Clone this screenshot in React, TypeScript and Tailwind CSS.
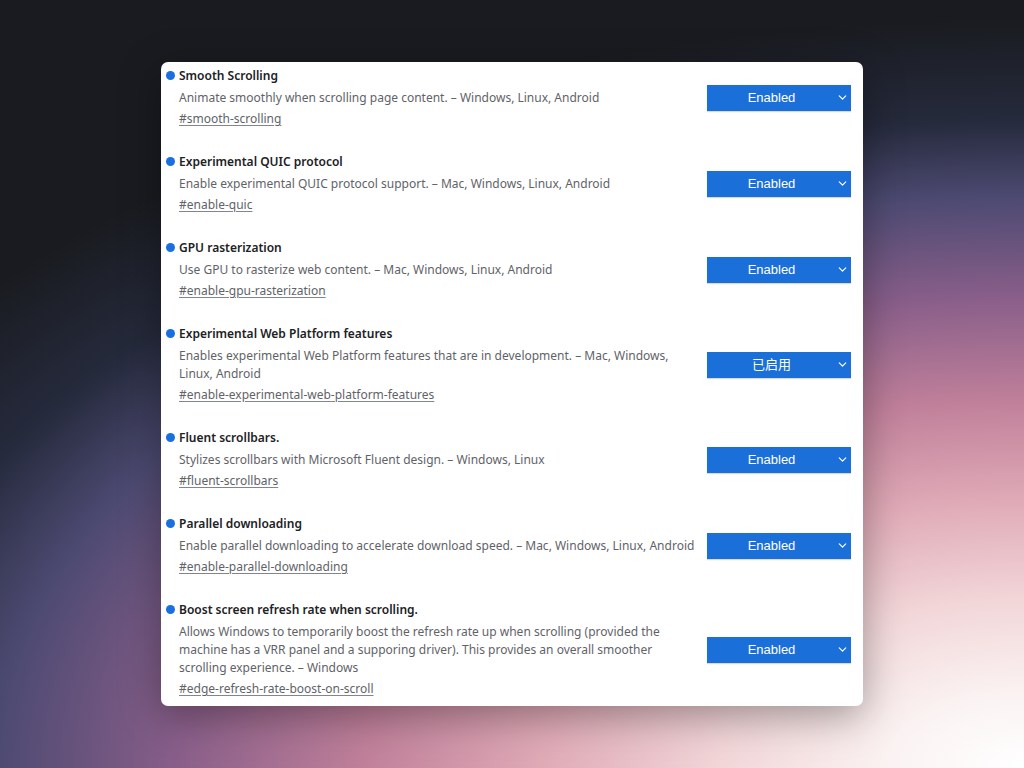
import { ChevronDown } from "lucide-react";

type Flag = {
  title: string;
  desc: string;
  tag: string;
  value: string;
};

const flags: Flag[] = [
  {
    title: "Smooth Scrolling",
    desc: "Animate smoothly when scrolling page content. – Windows, Linux, Android",
    tag: "#smooth-scrolling",
    value: "Enabled",
  },
  {
    title: "Experimental QUIC protocol",
    desc: "Enable experimental QUIC protocol support. – Mac, Windows, Linux, Android",
    tag: "#enable-quic",
    value: "Enabled",
  },
  {
    title: "GPU rasterization",
    desc: "Use GPU to rasterize web content. – Mac, Windows, Linux, Android",
    tag: "#enable-gpu-rasterization",
    value: "Enabled",
  },
  {
    title: "Experimental Web Platform features",
    desc: "Enables experimental Web Platform features that are in development. – Mac, Windows, Linux, Android",
    tag: "#enable-experimental-web-platform-features",
    value: "已启用",
  },
  {
    title: "Fluent scrollbars.",
    desc: "Stylizes scrollbars with Microsoft Fluent design. – Windows, Linux",
    tag: "#fluent-scrollbars",
    value: "Enabled",
  },
  {
    title: "Parallel downloading",
    desc: "Enable parallel downloading to accelerate download speed. – Mac, Windows, Linux, Android",
    tag: "#enable-parallel-downloading",
    value: "Enabled",
  },
  {
    title: "Boost screen refresh rate when scrolling.",
    desc: "Allows Windows to temporarily boost the refresh rate up when scrolling (provided the machine has a VRR panel and a supporing driver). This provides an overall smoother scrolling experience. – Windows",
    tag: "#edge-refresh-rate-boost-on-scroll",
    value: "Enabled",
  },
];

function FlagRow({ flag }: { flag: Flag }) {
  return (
    <div className="flex items-center pl-[5px] pr-3">
      <div className="flex items-start">
        <span className="mt-[5px] mr-[4px] h-[9px] w-[9px] shrink-0 rounded-full bg-[#1a6fe0]" />
        <div className="w-[516px]">
          <h3 className="text-[12px] leading-[20px] font-semibold text-[#202124]">
            {flag.title}
          </h3>
          <p className="mt-[3px] text-[12px] leading-[18px] text-[#5f6368]">{flag.desc}</p>
          <a className="mt-[2px] block text-[12px] leading-[20px] text-[#5f6368] underline decoration-[#80868b] underline-offset-2">
            {flag.tag}
          </a>
        </div>
      </div>
      <button className="ml-auto flex h-[26px] w-[144px] items-center bg-[#1b6fd8] pr-[2px] text-white shadow-[0_1px_1px_rgba(0,0,0,0.15)]">
        <span className="flex-1 text-center text-[13px] [font-family:'Liberation_Sans','Noto_Sans_CJK_SC',sans-serif]">
          {flag.value}
        </span>
        <ChevronDown size={13} strokeWidth={2.2} />
      </button>
    </div>
  );
}

export default function App() {
  return (
    <div
      className="flex h-screen w-full items-center justify-center bg-[#1a1b20] bg-[radial-gradient(1080px_600px_at_100%_100%,#ffffff_0%,#fbf3f3_12%,#f2d6d8_28%,#dfa9b6_45%,#c0809a_61%,#8a5f8a_78%,#4d4a72_95%,#252a3c_108%,#1a1b20_125%)]"
      style={{ fontFamily: '"Noto Sans", "Noto Sans CJK SC", sans-serif' }}
    >
      <div className="flex w-[702px] flex-col gap-[23px] rounded-[7px] bg-white pt-[4px] pb-[7px] shadow-[0_10px_40px_rgba(0,0,0,0.35)]">
        {flags.map((flag) => (
          <FlagRow key={flag.tag} flag={flag} />
        ))}
      </div>
    </div>
  );
}
